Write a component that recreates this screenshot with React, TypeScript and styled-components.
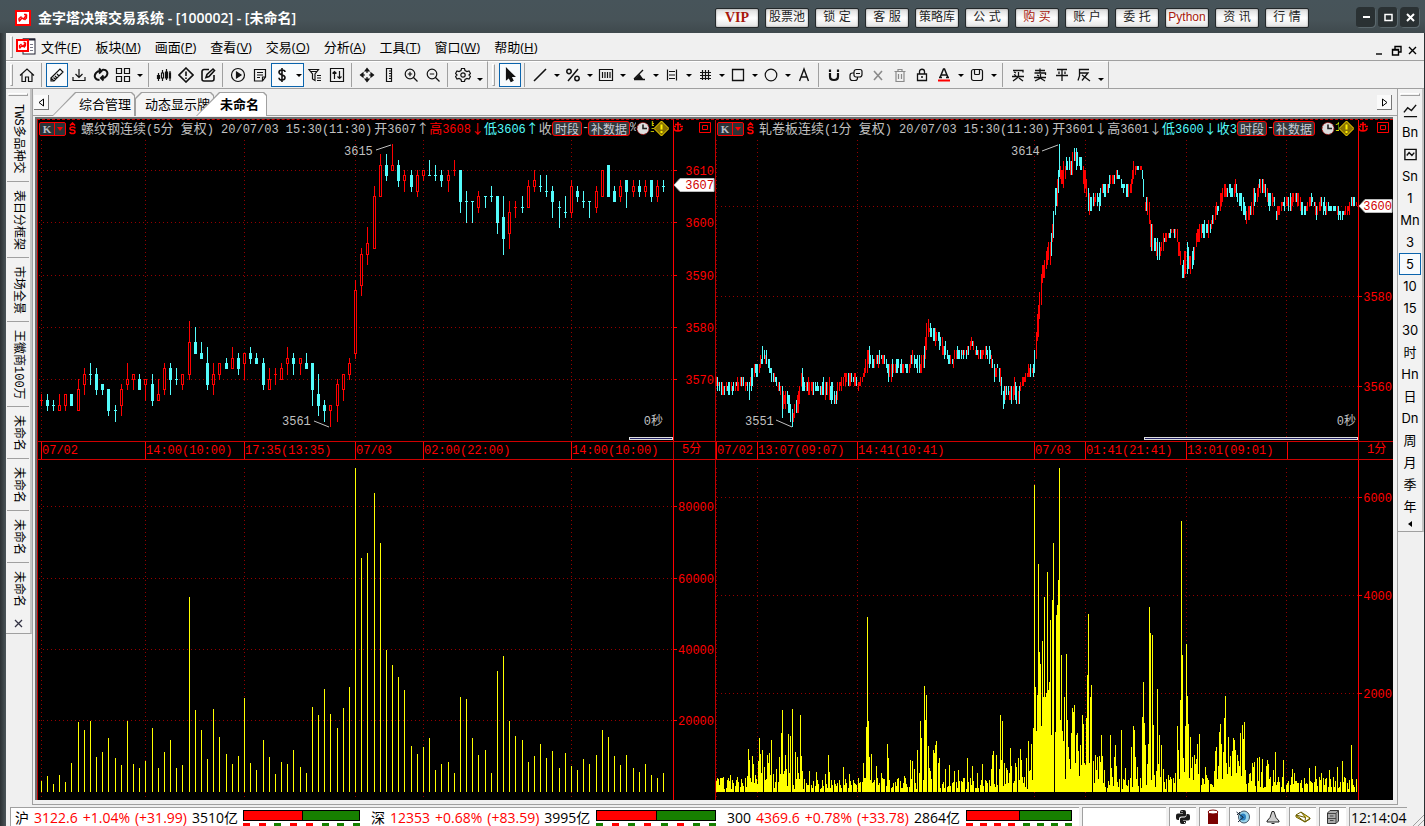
import React from 'react';
import styled, { createGlobalStyle, css } from 'styled-components';

const UI = '"Open Sans", "Noto Sans CJK SC", sans-serif';
const MONO = '"Liberation Mono", "Noto Sans CJK SC", monospace';
const LINE = '#a0a0a0';
const FACE = '#f0f0f0';

const Global = createGlobalStyle`
  * { box-sizing: border-box; }
  body { margin: 0; background: #3f4a4f; font: 13px/18px ${UI}; color: #000; }
  button { font: inherit; color: inherit; padding: 0; margin: 0; border: 0; background: none; cursor: default; }
  svg { display: block; flex: none; }
`;

/* ---------- icons ---------- */

const ICONS: Record<string, React.ReactNode> = {
  home: <path d="M1 8.500 8 2l7 6.500M3 7v7.500h3.500V10h3v4.500H13V7" />,
  ruler: <path d="m2 11 9-9 3 3-9 9zM2 11v3h3M6 9l2 2M8 7l2 2M4.500 10.500l2 2" />,
  download: <path d="M8 2v8M4.500 7 8 10.500 11.500 7M2 10v3.500h12V10" />,
  refresh: (
    <g strokeWidth="2">
      <path d="M6.500 13C2 13 .5 9 3 6c1-1.500 2.500-2.200 4.500-2.200M9 3c5-1 6.500 3 4.500 6-1 1.500-2.500 2.200-4.500 2.200" />
      <path d="M6 1.500 8.500 4 6 6.500M10.500 8.500 8 11l2.500 2.500" />
    </g>
  ),
  grid: <path d="M1.500 1.500h5v5h-5zM9.500 1.500h5v5h-5zM1.500 9.500h5v5h-5zM9.500 9.500h5v5h-5z" />,
  candles: (
    <g>
      <path d="M2.500 6v8M6.500 3v11M10.500 2v11M14 4v10" />
      <path d="M1.500 8.500h2v3h-2z" fill="#111" />
      <path d="M5.500 6h2v5h-2z" fill="#fff" />
      <path d="M9.500 5h2v6h-2zM13.500 6h1v5h-1z" fill="#111" />
    </g>
  ),
  alert: <path d="M8 1 15 8 8 15 1 8zM8 4.500v4.500M8 10.500v1.500" strokeWidth="1.600" />,
  edit: <path d="M9 2.500H4a2 2 0 0 0-2 2V12a2 2 0 0 0 2 2h8a2 2 0 0 0 2-2V8M6 10.500l1-3L13 2l1.500 1.500L9 9.500z" strokeWidth="1.600" />,
  play: (
    <g>
      <circle cx="8" cy="8" r="6.500" />
      <path d="m6.500 5 4.500 3-4.500 3z" fill="#111" />
    </g>
  ),
  note: <path d="M2.500 2.500h11V10l-3 4h-8zM13.500 10h-3v4M5 5.500h6M5 8h6M5 10.500h3" />,
  dollar: <path d="M11 5c0-1.500-1.300-2-3-2s-3 .7-3 2.300C5 8.800 11 7 11 10.500 11 12 9.700 13 8 13s-3-.7-3-2.300M8 1v14" strokeWidth="1.600" />,
  filter: <path d="M2 2.500h9.500L8 7v6.500L5.500 12V7zM4 4.500h6M10 8.500h4M10 11h4M10 13.500h4" />,
  updown: <path d="M1.500 1.500h13v13h-13zM5.500 12V4.500M3.500 6.500l2-2 2 2M10.500 4v7.500M8.500 9.500l2 2 2-2" />,
  move: <path d="M8 3v3M8 10v3M3 8h3M10 8h3M6 4l2-2.500L10 4zM6 12l2 2.500L10 12zM4 6 1.500 8 4 10zM12 6l2.500 2L12 10z" fill="#111" />,
  scale: <path d="M5.500 1.500h5v13h-5zM8 4h2.500M8 6.500h2.500M8 9h2.500M8 11.500h2.500" />,
  zoomIn: <path d="M11.800 7a4.800 4.800 0 1 1-9.600 0 4.800 4.800 0 0 1 9.600 0zM10.500 10.500l4 4M4.800 7h4.400M7 4.800v4.400" />,
  zoomOut: <path d="M11.800 7a4.800 4.800 0 1 1-9.600 0 4.800 4.800 0 0 1 9.600 0zM10.500 10.500l4 4M4.800 7h4.400" />,
  gear: (
    <g>
      <path d="M6.500 1.500h3l.5 2 2 1 2-.5 1.500 2.500L14 8l1.500 1.500L14 12l-2-.5-2 1-.5 2h-3l-.5-2-2-1-2 .5-1.500-2.500L2 8 .5 6.500 2 4l2 .5 2-1z" />
      <circle cx="8" cy="8" r="2.200" />
    </g>
  ),
  cursor: <path d="M4.500 1.500v11l2.500-2 2 4 2-1-2-4h3.500z" fill="#111" />,
  line: <path d="M2 14 14 2" strokeWidth="1.600" />,
  percent: <path d="M3 14 13 2M6.200 4.500a2.200 2.200 0 1 1-4.400 0 2.200 2.200 0 0 1 4.400 0zM14.200 11.500a2.200 2.200 0 1 1-4.400 0 2.200 2.200 0 0 1 4.400 0z" strokeWidth="1.500" />,
  columns: <path d="M1.500 2.500h13v11h-13zM4.500 5v6M7 5v6M9.500 5v6M12 5v6" />,
  angle: (
    <g>
      <path d="M3 12 12 3M3 12.500h11" strokeWidth="1.400" />
      <path d="M5 11.500 8.500 8l2.500 3.500z" fill="#111" />
    </g>
  ),
  levels: <path d="M3.500 2.500v11M12.500 2.500v11M5 4.500h6M5 8h6M5 11.500h6" />,
  hash: <path d="M5.500 3v10M8.500 3v10M11.500 3v10M3 5.500h11M3 8.500h11M3 11.500h11" />,
  square: <path d="M2.500 2.500h11v11h-11z" strokeWidth="1.300" />,
  circle: <circle cx="8" cy="8" r="5.800" />,
  letter: <path d="M3.500 14 8 2l4.500 12M5 10h6" strokeWidth="1.400" />,
  magnet: (
    <g strokeWidth="2.200">
      <path d="M4 6v3.500C4 12 5.500 13 8 13s4-1 4-3.500V6" />
      <path d="M4 2.500V5M12 2.500V5" />
    </g>
  ),
  overlap: <path d="M8.500 2.500H12A2 2 0 0 1 14 4.500v3A2.500 2.500 0 0 1 11.500 10H8a2 2 0 0 1-2-2V5a2.500 2.500 0 0 1 2.500-2.500zM6 6H4.500A2.500 2.500 0 0 0 2 8.500V11a2.500 2.500 0 0 0 2.500 2.500H7A2.500 2.500 0 0 0 9.500 11v-1M8 6.500h4" />,
  cross: <path d="m4 4 8 9M12 4l-8 9" stroke="#8a8a8a" strokeWidth="1.600" />,
  trash: <path d="M2.500 4.500h11M6 4V2.500h4V4M4 5v9.500h8V5M6.500 7v5M9.500 7v5" stroke="#8a8a8a" />,
  lock: <path d="M3.500 7h9v6.500h-9zM5.500 7V4.500c0-3 5-3 5 0V7M7 10h2" strokeWidth="1.300" />,
  textColor: (
    <g>
      <path d="M4 10.500 7.500 2h1L12 10.500M5.500 8h5M3 10.500h3M10 10.500h3" strokeWidth="1.500" />
      <path d="M2 13.500h12" stroke="#f00" strokeWidth="2" />
    </g>
  ),
  save: (
    <g>
      <rect x="2.500" y="2.500" width="11" height="11" rx="2" />
      <path d="M5.500 3v3.500a1 1 0 0 0 1 1h3a1 1 0 0 0 1-1V3" />
    </g>
  ),
  buy: <path d="M3 3.500h10v2M4 5l2 1M2 9.500h12M8.500 5v5l-5.500 4M9 11l4 3M4 7.500l2 1" strokeWidth="1.300" />,
  sell: <path d="M3 3.500h10M8 1.500v4M2.500 6h11v2M2 10.500h12M8.500 7v4l-5.500 3M9 11.500l4 2.500M5 8l2 1" strokeWidth="1.300" />,
  flat: <path d="M3 2.500h10M2 8.500h12M8 3v11M5 4.500v2.500M11 4.500v2.500" strokeWidth="1.300" />,
  reverse: <path d="M13 2.500H3.500V9L2 13.500M4 6h8L6 13.500M6 8l8 6" strokeWidth="1.300" />,
  trend: <path d="m1 10 4-5 4 3 5-6M1 14.500h14" strokeWidth="1.500" />,
  wave: <path d="M2 2.500h12v11H2zM4 9l2.500-3 3 3L12 6" strokeWidth="1.500" />,
};

const Icon = ({ name, size = 16 }: { name: string; size?: number }) => (
  <svg width={size} height={size} viewBox="0 0 16 16" fill="none" stroke="#111" strokeWidth="1.200" aria-hidden>
    {ICONS[name]}
  </svg>
);

const AppMark = () => (
  <svg width="16" height="16" viewBox="0 0 16 16" aria-hidden>
    <rect width="16" height="16" fill="#f00" />
    <rect x="2" y="2" width="12" height="12" fill="#fff" />
    <path d="M4 11.500 7 8l1.500 1L12 4.500M9 4.500h2.500M11.500 5v3l-2 2M6.500 6.500 4 8.500v2" stroke="#f00" strokeWidth="1.400" fill="none" />
  </svg>
);

const MenuMark = () => (
  <svg width="20" height="17" viewBox="0 0 20 17" aria-hidden>
    <rect x="7" y="1" width="12" height="15" fill="#fff" stroke="#223" />
    <path d="M7 1.500h12" stroke="#223" strokeWidth="2" />
    <path d="M14 6.500h3M14 9.500h3M14 12.500h3" stroke="#778" />
    <rect x="1" y="2" width="11" height="11" fill="#fff" stroke="#f00" strokeWidth="2" />
    <path d="M3.500 10.500 6 7.500l1 1 3-4M7.500 4.500H9M9.500 5v2.500l-1.500 2M5.500 6 3.500 7.500v2" stroke="#f00" strokeWidth="1.300" fill="none" />
  </svg>
);

/* ---------- window frame ---------- */

const Window = styled.div`
  display: flex;
  flex-direction: column;
  min-height: 100vh;
  padding: 0 1px 0 6px;
  background: linear-gradient(90deg, #2b3033, #4b5559 6px, #2b3033);
`;

const TitleBar = styled.header`
  display: flex;
  align-items: center;
  height: 33px;
  margin: 0 -1px 0 -6px;
  padding: 2px 5px 0 15px;
  background: linear-gradient(#47545a, #475358 60%, #3f494d);
  color: #fff;
`;

const Title = styled.h1`
  flex: 1;
  margin: 0 0 0 7px;
  font-size: 14px;
  font-weight: 600;
  white-space: nowrap;
`;

const TitleTools = styled.nav`
  display: flex;
  gap: 6px;
  margin-right: 47px;
`;

const TitleButton = styled.button<{ $tone?: 'red' | 'vip' }>`
  width: 44px;
  height: 20px;
  border: 1px solid #23282a;
  border-radius: 2px;
  background: linear-gradient(#dcdcdc, #fff 50%, #e4e4e4);
  box-shadow: inset 0 0 2px #888;
  color: ${p => (p.$tone ? '#a8180c' : '#222')};
  font: 12px/17px "Liberation Sans", "Noto Sans CJK SC", sans-serif;
  white-space: nowrap;
  ${p => p.$tone === 'vip' && css`font: 700 14px/17px "Liberation Serif", serif;`}
`;

const Caption = styled.div`
  display: flex;
  gap: 2px;
`;

const CaptionButton = styled.button`
  display: grid;
  place-items: center;
  width: 20px;
  height: 21px;
  border-radius: 4px;
  background: #2a3133;
  box-shadow: inset -1px -1px 0 #5b686d;
`;

const Client = styled.div`
  display: flex;
  flex: 1;
  flex-direction: column;
  background: ${FACE};
`;

/* ---------- menu and tool bars ---------- */

const Handle = styled.span`
  width: 3px;
  height: 22px;
  border: 1px solid ${LINE};
  border-left-color: #fff;
  border-top-color: #fff;
`;

const MenuBar = styled.nav`
  display: flex;
  align-items: center;
  height: 28px;
  padding: 0 5px 0 4px;
  border-bottom: 1px solid ${LINE};

  > ${Handle} { margin-right: 3px; }
`;

const MenuItems = styled.div`
  display: flex;
  flex: 1;
  gap: 14px;
  margin-left: 5px;
`;

const MdiButtons = styled.div`
  display: flex;
  gap: 4px;
  align-self: flex-end;
  padding-bottom: 3px;
`;

const ToolRow = styled.div`
  display: flex;
  height: 28px;
  border-bottom: 1px solid ${LINE};
`;

const ToolBar = styled.div<{ $start: number }>`
  display: flex;
  align-items: center;
  padding: 0 2px 0 4px;
  border-right: 1px solid ${LINE};
  border-top: 1px solid #fff;

  > ${Handle} { margin-right: ${p => p.$start}px; }
`;

const Tool = styled.button`
  display: grid;
  place-items: center;
  width: 22px;
  height: 24px;
`;

const Pick = styled.span<{ $on?: boolean }>`
  display: flex;
  height: 24px;
  ${p => p.$on && css`background: #f8fbfd; box-shadow: inset 0 0 0 1px #0a64ad;`}
`;

const Drop = styled.button<{ $low?: boolean }>`
  display: grid;
  place-items: center;
  width: 11px;
  height: 24px;
  padding-top: ${p => (p.$low ? 9 : 0)}px;

  &::before {
    content: '';
    border: 3px solid transparent;
    border-top-color: #000;
    border-bottom: 0;
  }
`;

const Divider = styled.span`
  width: 8px;
  height: 24px;
  background: linear-gradient(${LINE}, ${LINE}) 3px 0 / 1px 100% no-repeat;
`;

/* ---------- body ---------- */

const Body = styled.div`
  display: grid;
  grid-template-columns: 26px minmax(0, 1fr) 26px;
  align-items: start;
`;

const Grip = styled.span`
  width: 20px;
  height: 3px;
  border: 1px solid ${LINE};
  border-left-color: #fff;
  border-top-color: #fff;
`;

const Side = styled.aside<{ $gap: number }>`
  display: flex;
  flex-direction: column;
  align-items: center;
  padding: 4px 1px 0;
  border-right: 2px solid #c4c4c4;
  border-bottom: 1px solid ${LINE};
  background: #f2f2f2;

  > ${Grip} { margin-bottom: ${p => p.$gap}px; }
`;

const SideTab = styled.button`
  width: 22px;
  padding: 8px 0 7px;
  border-bottom: 1px solid ${LINE};
  font: 12px/22px ${MONO};
  writing-mode: vertical-rl;
  text-orientation: sideways;
  white-space: nowrap;

  &:last-of-type { border-bottom: 0; }
`;

const SideClose = styled.span<{ $height: number }>`
  display: grid;
  place-items: center;
  height: ${p => p.$height}px;
  width: 20px;
`;

const Period = styled.button<{ $on?: boolean }>`
  display: grid;
  place-items: center;
  width: 22px;
  height: 22px;
  font: 13px/20px "Inter", "Noto Sans CJK SC", sans-serif;
  ${p => p.$on && css`background: #f8fbfd; box-shadow: inset 0 0 0 1px #0a64ad;`}
`;

const Main = styled.main`
  border: 1px solid ${LINE};
  border-top: 0;
`;

const TabStrip = styled.div`
  display: flex;
  justify-content: space-between;
  height: 27px;
  padding: 6px 5px 0 1px;
  border-bottom: 1px solid ${LINE};
`;

const Tabs = styled.div`
  display: flex;
  flex: 1;
  align-items: flex-end;
  height: 21px;
  margin-left: 3px;
`;

const Arrow = styled.button`
  display: grid;
  place-items: center;
  width: 15px;
  height: 15px;
  background: #fafafa;
  border: solid #777;
  border-width: 0 1px 1px 0;
`;

const Tab = styled.button<{ $kind: 'first' | 'mid' | 'active' }>`
  position: relative;
  height: 24px;
  padding: 0 ${p => (p.$kind === 'active' ? 8 : 4)}px 0 ${p => (p.$kind === 'first' ? 27 : p.$kind === 'mid' ? 10 : 24)}px;
  margin-left: ${p => (p.$kind === 'active' ? -18 : 0)}px;
  font-weight: ${p => (p.$kind === 'active' ? 700 : 400)};
  white-space: nowrap;
  background: ${LINE};
  clip-path: ${p => (p.$kind === 'mid'
    ? 'polygon(0 6px, 6px 0, calc(100% - 3px) 0, 100% 3px, 100% 100%, 0 100%)'
    : 'polygon(0 100%, 23px 0, calc(100% - 3px) 0, 100% 3px, 100% 100%)')};

  &::before {
    content: '';
    position: absolute;
    inset: 1px 1px 0 1px;
    background: ${p => (p.$kind === 'active' ? '#fff' : '#f5f5f5')};
    clip-path: ${p => (p.$kind === 'mid'
      ? 'polygon(0 6px, 6px 0, calc(100% - 3px) 0, 100% 3px, 100% 100%, 0 100%)'
      : 'polygon(0 100%, 23px 0, calc(100% - 3px) 0, 100% 3px, 100% 100%)')};
  }

  span { position: relative; }
`;

/* ---------- charts ---------- */

const ChartFrame = styled.div`
  margin: 1px 4px 4px 2px;
  border: solid #6d6d6d;
  border-width: 2px 0 0 2px;
`;

const Charts = styled.div`
  display: grid;
  grid-template-columns: repeat(2, minmax(0, 1fr));
  background: #000;
  border-top: 1px dashed #d00000;
`;

const Panel = styled.section<{ $axis: number }>`
  display: grid;
  grid-template-columns: minmax(0, 1fr) ${p => p.$axis}px;
  grid-template-rows: 17px 304px 19px 340px;
  border-left: 1px solid #c00000;
  font: 12px/17px ${MONO};
`;

const QuoteRow = styled.div`
  position: relative;
  display: flex;
  align-items: center;
  padding-left: 1px;
  overflow: hidden;
  white-space: pre;
`;

const KButton = styled.button`
  display: flex;
  align-items: center;
  flex: none;
  width: 27px;
  height: 14px;
  border: 1px solid #f00;
  border-radius: 2px;
  background: #2c3236;
  color: #b9bec8;
  font: 700 11px/12px "Liberation Serif", serif;

  span { flex: 1; border-right: 1px solid #f00; }
  svg { margin: 0 2px; }
`;

const Quote = styled.span<{ $color: string }>`
  display: flex;
  align-items: baseline;
  height: 17px;
  color: ${p => p.$color};
  line-height: 16px;
`;

const Prices = styled.div`
  display: flex;
  margin-left: 2px;
`;

const Han = styled.span`
  font-family: "Noto Sans CJK SC", sans-serif;
  font-size: 13px;
`;

const Overlay = styled.div`
  position: absolute;
  top: 1px;
  right: 4px;
  display: flex;
  align-items: center;
`;

const Sliver = styled.span<{ $width: number; $color?: string }>`
  width: ${p => p.$width}px;
  height: 15px;
  overflow: hidden;
  color: ${p => p.$color ?? '#c0c0c0'};
  line-height: 15px;
`;

const Chip = styled.button`
  height: 15px;
  padding: 0 2px;
  border: 1px solid #f00;
  border-radius: 3px;
  background: #33383b;
  color: #c9cbd6;
  font: 12px/12px "Noto Sans CJK SC", sans-serif;
`;

const AxisCell = styled.div`
  display: flex;
  justify-content: space-between;
  padding: 2px 4px 0 0;
  border-left: 1px solid #f00;
`;

const Plot = styled.div`
  position: relative;
  > svg { width: 100%; height: 100%; }
`;

const Countdown = styled.span<{ $right: number }>`
  position: absolute;
  right: ${p => p.$right}px;
  bottom: 10px;
  color: #c0c0c0;
`;

const RangeBar = styled.span<{ $width: string }>`
  position: absolute;
  right: 0;
  bottom: 1px;
  width: ${p => p.$width};
  height: 3px;
  background: #202060;
  border: 1px solid #ddd;
`;

const TimeRow = styled.div<{ $cols: string }>`
  display: grid;
  grid-template-columns: ${p => p.$cols};
  border: solid #d00000;
  border-width: 1px 0;
  color: #f00;
  line-height: 19px;

  span {
    min-width: 0;
    height: 17px;
    border-left: 1px solid #f00;
    white-space: nowrap;
  }
  span:empty:first-child { border: 0; }
`;

const PeriodCell = styled.div`
  border: solid #d00000;
  border-width: 1px 0 1px 1px;
  padding-left: 8px;
  color: #f00;
`;

const AxisSvg = styled.svg`
  width: 100%;
  height: 100%;
  border-left: 1px solid #f00;
  font: 12px ${MONO};
`;

/** Splits a quote string so that Chinese runs are set one size larger than the digits. */
const Mixed = ({ text, color = '#c0c0c0' }: { text: string; color?: string }) => (
  <Quote $color={color}>
    {text.split(/([\x20-\x7e]+)/).filter(Boolean).map((run, i) =>
      /^[\x20-\x7e]/.test(run) ? <span key={i}>{run}</span> : <Han key={i}>{run}</Han>,
    )}
  </Quote>
);

// Five-minute bars as open, high, low, close above 3500.
const CANDLES = `66,67,65,66,r 66,67,64,65 65,66,64,65 64,67,64,65 65,67,64,67 67,67,65,65 64,70,64,68 69,72,67,71 71,73,69,71 71,72,67,68
69,69,67,68 68,68,63,64 64,65,62,64 65,69,63,68 69,73,68,70 70,71,68,71 70,71,68,68 69,70,66,70 69,71,65,66 66,70,66,67
68,73,67,72 72,73,67,70 70,72,69,70 69,71,68,71 71,81,70,77 77,80,75,75 75,77,74,74 73,76,68,69 69,73,67,71 71,73,70,73
73,74,72,72 72,76,72,74 74,75,71,72 73,75,70,75 75,76,73,74 74,75,73,73 73,74,68,69 68,72,68,70 71,72,69,71,r 70,73,70,72
73,76,71,74 74,75,71,73 73,74,71,74 73,75,72,72 73,73,65,68 67,71,63,65 65,66,62,64 64,65,61,65 65,70,62,69 68,71,66,71
71,74,70,73 75,89,74,87 88,95,86,94 94,99,92,96 95,107,95,105 105,113,105,111 111,113,108,109 110,115,110,111 111,112,107,108 108,110,106,109
109,110,106,107 106,110,105,109 109,110,108,110 109,112,109,109 109,111,108,109 109,110,107,108 108,110,106,109 110,112,109,110,r 110,110,102,104 104,106,100,104
104,104,100,104 103,106,102,105 105,105,103,105 105,107,104,105 105,105,98,100 101,105,94,97 98,104,95,102 103,104,101,103,r 103,105,102,103 103,108,103,107
107,110,106,108 107,109,106,107 106,109,105,106 106,107,101,104 103,104,99,103 102,105,101,102 102,108,101,107 106,107,104,105 104,106,103,104 104,104,101,104
103,107,102,106 105,110,105,110 111,111,105,105 106,107,104,104 105,108,104,107 108,108,103,106 106,108,105,107 107,108,105,106 106,108,105,107 108,108,104,105
105,108,104,107 107,108,106,107`
  .split(/\s+/)
  .map(row => {
    const [o, h, l, c, flag] = row.split(',');
    return { o: +o, h: +h, l: +l, c: +c, up: +c > +o || flag === 'r' };
  });

const barX = (i: number) => 3 + Math.floor((i * 37) / 6);
const priceY = (p: number) => Math.round(33 + (110 - p) * 5.22);

// Height in pixels of each five-minute volume bar.
const VOLUMES = [
  11, 16, 8, 17, 10, 29, 70, 62, 71, 35, 40, 54, 34, 27, 71, 28, 24, 31, 64, 24,
  40, 52, 24, 27, 195, 82, 62, 33, 83, 55, 38, 28, 36, 94, 29, 22, 52, 35, 18, 30,
  28, 42, 25, 19, 85, 77, 103, 78, 64, 84, 105, 324, 234, 239, 299, 249, 142, 127, 115, 102,
  46, 38, 45, 54, 22, 28, 30, 19, 95, 93, 54, 37, 42, 19, 121, 136, 71, 56, 52, 30,
  36, 48, 34, 41, 24, 39, 26, 22, 33, 28, 37, 62, 55, 36, 27, 37, 24, 20, 28, 17, 14, 19,
];

// One-minute price envelope: x, top, bottom, in thirds of a pixel.
const ENVELOPE = `12,742,769 20,755,782 30,755,795 45,755,782 55,755,795 70,755,782 90,742,769 105,755,782 110,755,809 117,728,769 125,702,741 137,702,740
150,660,702 165,660,702 172,702,740 185,728,755 200,755,782 210,782,849 222,782,822 232,800,863 242,849,891 250,809,849 258,769,836 266,714,769
275,742,782 290,755,795 310,755,782 325,769,795 340,742,795 355,755,822 368,782,822 380,755,795 395,728,755 410,728,769 425,728,769 438,755,782
450,742,755 457,702,740 467,648,714 475,675,702 485,687,714 500,660,702 515,675,702 522,675,714 528,700,755 540,702,740 550,687,728 570,702,728
590,702,728 598,660,700 610,687,714 626,687,740 637,648,705 643,580,648 650,580,620 665,594,633 680,605,645 693,633,675 705,660,687 715,675,705
722,687,714 730,648,687 745,660,687 760,660,687 770,633,660 778,621,648 785,648,675 800,660,687 815,660,687 828,648,687 837,675,714 843,700,755
855,702,728 865,728,769 873,769,836 880,769,795 890,769,800 898,769,836 907,755,800 917,782,836 925,742,795 935,742,769 950,702,740 965,700,740
968,580,700 976,570,648 980,499,600 985,433,540 992,405,458 1000,390,445 1007,337,405 1013,340,430 1018,290,350 1025,216,300 1033,161,242 1040,95,160
1048,108,161 1055,95,161 1062,80,120 1070,80,120 1078,80,135 1087,54,108 1095,67,108 1105,80,120 1113,95,161 1120,120,200 1130,200,242 1140,200,242
1150,189,216 1162,189,242 1170,162,200 1185,162,189 1195,135,175 1205,130,160 1215,120,148 1222,120,160 1230,162,175 1242,162,200 1254,162,189 1264,95,162
1271,108,121 1287,108,121 1292,121,202 1299,215,256 1309,202,256 1314,280,364 1324,310,364 1337,335,390 1344,350,378 1351,310,364 1364,310,337 1379,297,310
1394,297,337 1404,350,405 1411,391,470 1420,337,430 1426,297,420 1432,378,432 1441,364,417 1449,324,390 1456,283,337 1469,283,324 1489,283,324 1504,256,283
1512,215,256 1522,215,256 1529,162,229 1539,162,200 1549,162,202 1559,175,202 1569,148,189 1579,190,229 1589,202,242 1601,229,283 1611,229,269 1622,189,242
1634,175,215 1642,148,189 1652,148,189 1662,162,200 1672,189,242 1684,189,215 1692,229,269 1709,215,242 1722,202,229 1734,202,242 1744,175,215 1754,189,229
1764,202,256 1779,229,256 1794,202,225 1804,189,229 1811,229,269 1824,202,242 1839,215,256 1854,229,242 1874,229,256 1894,242,269 1909,215,256 1919,202,229
1927,202,229 1940,215,229`
  .split(/\s+/)
  .map(row => row.split(',').map(Number));

const noise = (n: number) => {
  const v = Math.sin(n * 127.1 + 311.7) * 43758.5453;
  return v - Math.floor(v);
};

const STEP = 1.27;
const TICK = 13.5;

const minuteBars = () => {
  let up = '';
  let down = '';
  let k = 0;
  let prev = 0;
  for (let i = 0; i < 505; i++) {
    const x = Math.floor(i * STEP);
    const u = 12 + x * 3;
    while (k < ENVELOPE.length - 2 && ENVELOPE[k + 1][0] < u) k++;
    const [x0, t0, b0] = ENVELOPE[k];
    const [x1, t1, b1] = ENVELOPE[k + 1];
    const f = Math.min(1, Math.max(0, (u - x0) / (x1 - x0)));
    const top = t0 + (t1 - t0) * f;
    const bottom = b0 + (b1 - b0) * f;
    const h = bottom - top;
    const a = 769 + Math.round((top + (noise(i) - 0.4) * h * 0.5 - 769) / TICK) * TICK;
    const b = Math.max(a + TICK, 769 + Math.round((bottom - (noise(i + 900) - 0.4) * h * 0.5 - 769) / TICK) * TICK);
    const mid = (top + bottom) / 2;
    const rising = mid < prev - 1.5 ? noise(i + 50) < 0.75 : mid > prev + 1.5 ? noise(i + 50) < 0.25 : noise(i + 50) < 0.42;
    const d = `M${x}.5 ${Math.round(a / 3 - 7)}V${Math.round(b / 3 - 7)}`;
    if (rising) up += d;
    else down += d;
    prev = mid;
  }
  return { up, down };
};

const MINUTES = minuteBars();

// Tallest one-minute volume bars: x, top, measured from the plot's upper left.
const PEAKS = `20,955 42,945 83,867 86,900 92,888 95,912 106,903 108,834 110,882 115,870 119,921 126,885 129,909 131,879 135,840 147,927 153,891 158,820 160,750 167,885 169,927 174,822 178,828 182,747 184,822
190,876 194,891 197,939 201,765 203,888 206,933 222,933 237,936 257,942 265,885 268,936 299,921 312,942 345,910 351,800 353,471 356,783 358,891 362,882 374,918 386,939 399,852
401,894 438,948 451,900 455,903 460,927 467,870 472,940 474,783 476,834 483,678 485,780 488,705 492,858 494,925 496,933 503,870 506,880 508,855 510,843 515,910 517,894 530,927
540,915 552,933 560,930 580,894 592,918 603,939 615,912 635,927 637,885 640,873 646,885 653,927 655,765 658,900 660,783 665,910 669,925 671,930 676,940 678,864 681,918 690,909 692,921 696,894 701,867
703,900 715,894 719,843 721,933 724,930 726,852 730,804 733,75 735,681 740,735 742,312 744,576 746,612 751,543 753,714 755,411 758,711 762,336 765,690
767,666 769,480 774,420 777,249 783,465 785,435 788,360 790,24 794,585 796,813 799,843 801,711 805,582 808,780 810,861 813,897 817,820 819,744 822,756 824,735
828,825 830,819 833,873 838,855 840,915 842,765 844,792 849,915 851,774 853,645 855,462 860,711 862,675 867,903 872,885 874,930 876,891 881,888 883,905 885,825 888,888 892,930 906,825
908,925 915,891 917,855 919,918 931,810 940,925 953,861 958,798 960,810 963,891 967,921 978,771 981,666 983,789 985,855 990,912 992,852 994,441 997,519 1001,525 1003,795
1010,933 1012,687 1015,912 1017,825 1022,855 1026,927 1058,798 1060,870 1065,720 1067,183 1069,585 1072,894 1076,798 1078,552 1080,708 1083,792 1088,831 1090,925 1092,891 1097,885 1099,912 1101,897
1103,852 1108,822 1122,921 1142,933 1144,873 1147,861 1151,918 1153,816 1156,792 1158,852 1163,876 1165,774 1167,708 1169,909 1174,831 1176,921 1178,888 1183,873 1185,834 1187,840 1190,870
1194,885 1197,903 1199,918 1201,819 1206,795 1208,837 1210,786 1213,930 1228,909 1230,921 1233,906 1240,894 1244,891 1249,936 1251,897 1260,918 1262,900 1265,912 1276,930 1281,876 1299,900 1319,927 1324,939
1358,924 1371,918 1384,939 1403,930 1422,921 1433,903 1453,855 1464,969`
  .split(/\s+/)
  .map(row => row.split(',').map(Number));

const minuteVolume = () => {
  let d = '';
  for (let i = 0; i < 505; i++) {
    const x = Math.floor(i * STEP);
    const hot = x > 318 && x < 346;
    const spread = hot ? 50 : x >= 346 && x < 386 ? 30 : (x > 30 && x < 90) || (x > 425 && x < 535) ? 18 : 12;
    const h = Math.round((hot ? 55 : 3) + noise(i + 77) * spread);
    d += `M${x}.5 332v-${h}`;
  }
  PEAKS.forEach(([x, y]) => {
    d += `M${Math.floor(x / 2.2725 - 4)}.5 332V${Math.round(y / 3)}`;
  });
  return d;
};

const MINUTE_VOLUME = minuteVolume();

const Grid = ({ w, h, xs, ys, top }: { w: number; h: number; xs: number[]; ys: number[]; top: number }) => (
  <g stroke="#960000" strokeDasharray="1 3" shapeRendering="crispEdges">
    {xs.map(x => <path key={`x${x}`} d={`M${x}.5 ${top}V${h - 2}`} />)}
    {ys.map(y => <path key={`y${y}`} d={`M1 ${y}.5H${w}`} />)}
  </g>
);

const Axis = ({ w, h, labels, tag }: { w: number; h: number; labels: [string, number][]; tag?: [string, number] }) => (
  <AxisSvg viewBox={`0 0 ${w - 1} ${h}`} preserveAspectRatio="none">
    {labels.map(([text, y]) => (
      <g key={text}>
        <path d={`M0 ${y}.5h3`} stroke="#f00" shapeRendering="crispEdges" />
        <text x={w - 2} y={y + 5} textAnchor="end" fill="#f00">{text}</text>
      </g>
    ))}
    {tag && (
      <g>
        <path d={`M0 ${tag[1]}l6 -6.500h${w - 8}v13h-${w - 8}z`} fill="#fff" stroke="#bbb" />
        <text x={w - 2} y={tag[1] + 4} textAnchor="end" fill="#d00000">{tag[0]}</text>
      </g>
    )}
  </AxisSvg>
);

const GRAY = '#c0c0c0';
const CYAN = '#54fcfc';
const RED = '#f00';
const YELLOW = '#e6d800';

type HeadProps = {
  name: string;
  unit: string;
  parts: [string, string][];
  /** Fragments of the covered quote that show between the chips. */
  slivers: [string, string, string];
};

const PanelHead = ({ name, unit, parts, slivers }: HeadProps) => (
  <>
    <QuoteRow>
      <KButton aria-label="K线类型">
        <span>K</span>
        <svg width="6" height="4" viewBox="0 0 6 4"><path d="M0 0h6L3 4z" fill="#f00" /></svg>
      </KButton>
      <svg width="15" height="14" viewBox="0 0 15 14" fill="none" stroke="#f00" strokeWidth="1.600" aria-hidden>
        <path d="M4 3.500 6.500 1 9 3.500M9 6.500c0-1-1-1.500-2.500-1.500S4 5.500 4 6.500 5 8 6.500 8 9 8.800 9 10s-1 1.500-2.500 1.500S4 11 4 10" />
      </svg>
      <Mixed text={`${name}(${unit} 复权) 20/07/03 15:30(11:30)`} />
      <Prices>
        {parts.map(([text, color], i) => <Mixed key={i} text={text} color={color} />)}
      </Prices>
      <Overlay>
        <Chip>时段</Chip>
        <Sliver $width={6}>{slivers[0]}</Sliver>
        <Chip>补数据</Chip>
        <Sliver $width={6}>{slivers[1]}</Sliver>
        <svg width="14" height="15" viewBox="0 0 14 15" aria-hidden>
          <circle cx="7" cy="7.500" r="6" fill="#ddd" stroke="#a01010" strokeDasharray="2 1" />
          <path d="M7 3.500v4h4" stroke="#222" strokeWidth="1.600" fill="none" />
        </svg>
        <Sliver $width={4} $color={YELLOW}>{slivers[2]}</Sliver>
        <svg width="15" height="15" viewBox="0 0 15 15" aria-hidden>
          <path d="M7.500 0 15 7.500 7.500 15 0 7.500z" fill="#8a7400" stroke="#ffe000" />
          <path d="M7.500 3.500v5M7.500 10v2" stroke="#fff200" strokeWidth="2" />
        </svg>
      </Overlay>
    </QuoteRow>
    <AxisCell>
      <svg width="10" height="10" viewBox="0 0 10 10" fill="none" stroke="#f00" strokeWidth="1.600" aria-hidden>
        <path d="M4 0v9M1 2.500h6M0 6c0 2 2 3 4 3s4-1 4-3M0 4.500h2M6 4.500h3" />
      </svg>
      <svg width="12" height="11" viewBox="0 0 12 11" fill="none" stroke="#f00" aria-hidden>
        <path d="M.5.5h11v10H.5zM3.500 3.500h5v4h-5z" />
      </svg>
    </AxisCell>
  </>
);

const FiveMinutePanel = () => (
  <Panel $axis={42}>
    <PanelHead
      name="螺纹钢连续"
      unit="5分"
      parts={[['开3607↑', GRAY], ['高3608↓', RED], ['低3606↑', CYAN], ['收', GRAY]]}
      slivers={['-', '%', '里']}
    />
    <Plot>
      <svg viewBox="0 0 635 304" preserveAspectRatio="none" role="img" aria-label="螺纹钢连续 5分 K线">
        <Grid w={635} h={304} xs={[3, 107, 206, 317, 385, 533]} ys={[33, 85, 138, 190, 242]} top={3} />
        <g shapeRendering="crispEdges">
          {CANDLES.map(({ o, h, l, c, up }, i) => {
            const x = barX(i);
            const top = priceY(Math.max(o, c));
            const low = priceY(Math.min(o, c));
            const color = up ? RED : CYAN;
            return (
              <g key={i} stroke={color}>
                <path d={`M${x + 0.5} ${priceY(h)}V${priceY(l) + 1}`} />
                {low === top ? (
                  <path d={`M${x - 1} ${top + 0.5}h3`} />
                ) : (
                  <rect x={x - 0.5} y={top + 0.5} width="2" height={low - top} fill={up ? '#000' : color} />
                )}
              </g>
            );
          })}
        </g>
        <path d="m338 13 15 -5M276 284l15 6" stroke={GRAY} />
        <g fill={GRAY}>
          <text x="306" y="18">3615</text>
          <text x="244" y="288">3561</text>
        </g>
      </svg>
      <Countdown $right={10}>0秒</Countdown>
      <RangeBar $width="7%" />
    </Plot>
    <Axis w={42} h={304} labels={[['3610', 33], ['3600', 85], ['3590', 138], ['3580', 190], ['3570', 242]]} tag={['3607', 48]} />
    <TimeRow $cols="3fr 104fr 99fr 111fr 68fr 148fr 102fr">
      <span />
      <span>07/02</span>
      <span>14:00(10:00)</span>
      <span>17:35(13:35)</span>
      <span>07/03</span>
      <span>02:00(22:00)</span>
      <span>14:00(10:00)</span>
    </TimeRow>
    <PeriodCell>5分</PeriodCell>
    <Plot>
      <svg viewBox="0 0 635 340" preserveAspectRatio="none" role="img" aria-label="螺纹钢连续 成交量">
        <Grid w={635} h={340} xs={[3, 107, 206, 317, 385, 533]} ys={[46, 118, 189, 260]} top={8} />
        <path
          d={VOLUMES.map((v, i) => `M${barX(i)}.5 332v-${v}`).join('')}
          stroke="#ff0"
          shapeRendering="crispEdges"
        />
      </svg>
    </Plot>
    <Axis w={42} h={340} labels={[['80000', 46], ['60000', 118], ['40000', 189], ['20000', 260]]} />
  </Panel>
);

const OneMinutePanel = () => (
  <Panel $axis={35}>
    <PanelHead
      name="轧卷板连续"
      unit="1分"
      parts={[['开3601↓', GRAY], ['高3601↓', GRAY], ['低3600↓', CYAN], ['收3', CYAN]]}
      slivers={['-', '', '1']}
    />
    <Plot>
      <svg viewBox="0 0 642 304" preserveAspectRatio="none" role="img" aria-label="轧卷板连续 1分 K线">
        <Grid w={642} h={304} xs={[0, 41, 141, 318, 369, 470, 570]} ys={[69, 159, 249]} top={3} />
        <g shapeRendering="crispEdges">
          <path d={MINUTES.up} stroke={RED} />
          <path d={MINUTES.down} stroke={CYAN} />
          <path d="M343.500 7V40M76.500 275V290" stroke={CYAN} />
        </g>
        <path d="m326 14 16 -6M60 283l16 7" stroke={GRAY} />
        <g fill={GRAY}>
          <text x="295" y="18">3614</text>
          <text x="29" y="288">3551</text>
        </g>
      </svg>
      <Countdown $right={2}>0秒</Countdown>
      <RangeBar $width="33.3%" />
    </Plot>
    <Axis w={35} h={304} labels={[['3580', 159], ['3560', 249]]} tag={['3600', 69]} />
    <TimeRow $cols="41fr 100fr 177fr 51fr 101fr 101fr 71fr">
      <span>07/02</span>
      <span>13:07(09:07)</span>
      <span>14:41(10:41)</span>
      <span>07/03</span>
      <span>01:41(21:41)</span>
      <span>13:01(09:01)</span>
      <span />
    </TimeRow>
    <PeriodCell>1分</PeriodCell>
    <Plot>
      <svg viewBox="0 0 642 340" preserveAspectRatio="none" role="img" aria-label="轧卷板连续 成交量">
        <Grid w={642} h={340} xs={[0, 41, 141, 318, 369, 470, 570]} ys={[37, 135, 233]} top={8} />
        <path d={MINUTE_VOLUME} stroke="#ff0" shapeRendering="crispEdges" />
      </svg>
    </Plot>
    <Axis w={35} h={340} labels={[['6000', 37], ['4000', 135], ['2000', 233]]} />
  </Panel>
);

/* ---------- status bar ---------- */

const StatusBar = styled.footer`
  display: flex;
  gap: 3px;
  height: 21px;
  padding: 2px 0 0 4px;
  font-size: 14px;
  line-height: 17px;
`;

const Pane = styled.div<{ $width?: number; $plain?: boolean }>`
  display: flex;
  align-items: flex-start;
  flex: ${p => (p.$width ? `0 0 ${p.$width}px` : '1 1 0')};
  border: solid ${LINE};
  border-width: 1px 0 0 1px;
  background: ${p => (p.$plain ? FACE : '#fff')};
  white-space: nowrap;
`;

const IconPane = styled(Pane)`
  justify-content: center;
  padding-top: 1px;
`;

const Time = styled.time`
  padding: 1px 0 0 1px;
`;

const Grips = styled.div`
  margin-left: auto;
  align-self: flex-end;
`;

const Market = styled.div`
  display: flex;
  flex: 1;
  gap: 5px;
  margin: 1px 7px 0 4px;
`;

const Num = styled.span<{ $red?: boolean }>`
  color: ${p => (p.$red ? '#f00' : '#000')};
`;

const Breadth = styled.div<{ $width: number }>`
  flex: 0 0 ${p => p.$width}px;
  margin: 1px 0 0 auto;
`;

const Ratio = styled.div`
  height: 11px;
  border: 1px solid #000;
  background: linear-gradient(90deg, #f00 50%, #000 50%, #000 51%, #178000 51%);
`;

const Dashes = styled.div`
  display: flex;
  justify-content: space-between;
  margin-top: 2px;
`;

const Dash = styled.span<{ $up: boolean }>`
  width: 7px;
  height: 3px;
  background: ${p => (p.$up ? '#f00' : '#178000')};
`;

const MARKETS = [
  { name: '沪', nums: ['3122.6', '+1.04%', '(+31.99)'], total: '3510亿', width: 117, dash: 'rrgrrggg' },
  { name: '深', nums: ['12353', '+0.68%', '(+83.59)'], total: '3995亿', width: 120, dash: 'grgrgrgg' },
  { name: '300', nums: ['4369.6', '+0.78%', '(+33.78)'], total: '2864亿', width: 106, dash: 'rrrrgggg' },
];

const STATUS_ICONS: [string, React.ReactNode][] = [
  ['Python', (
    <g key="a" fill="#1c1c1c">
      <path d="M5 3a2 2 0 0 1 2-2h2a2 2 0 0 1 2 2v3a1.500 1.500 0 0 1-1.500 1.500h-3A2.500 2.500 0 0 0 4 10v1H3a2 2 0 0 1-2-2V6.500a2 2 0 0 1 2-2h5V4H5z" />
      <path d="M11.500 5H13a2 2 0 0 1 2 2v2.500a2 2 0 0 1-2 2H8v.500h3v1a2 2 0 0 1-2 2H7a2 2 0 0 1-2-2v-3a1.500 1.500 0 0 1 1.500-1.500h3a2.500 2.500 0 0 0 2-2.500z" />
      <path d="M6.500 2.500h1M9 13.500h1" stroke="#fff" />
    </g>
  )],
  ['数据库', <g key="b"><rect x="3" y="3" width="10" height="12" fill="#7c0000" /><ellipse cx="8" cy="3" rx="5" ry="2" fill="#fff" stroke="#7c0000" /></g>],
  ['行情连接', <g key="c"><ellipse cx="9" cy="8" rx="5.500" ry="6" fill="#9cd4ea" stroke="#456" /><ellipse cx="8" cy="8" rx="3" ry="3.500" fill="#2a7fc0" /><path d="m1.500 3 7 5.500M3 13l5-4.500M2 6l3-3" stroke="#123" /></g>],
  ['提醒', <path key="d" d="M7 2.500h2l2 6 3 3.500v1H2v-1l3-3.500zM6.500 14.500h3" fill="#ccc" stroke="#222" />],
  ['邮件', <path key="e" d="m1 6 5-3 9 6-5 4zM1 6l9.500 2.500L6 3M10.500 8.500 10 13M1 6l0 2 9 5 5-3V9" fill="#f6e04a" stroke="#6b5d00" />],
  ['主机', <g key="f"><path d="M2.500 4 5 1.500h8.500V12L11 14.500H2.500z" fill="#aaa" stroke="#333" /><path d="M3 4.500h8V14M11 4.500l2.500-3M5 7h3.500M5 11.500h3.500M3 9.500h8" stroke="#444" fill="none" /></g>],
];

/* ---------- page ---------- */

const MENUS = [['文件', 'F'], ['板块', 'M'], ['画面', 'P'], ['查看', 'V'], ['交易', 'O'], ['分析', 'A'], ['工具', 'T'], ['窗口', 'W'], ['帮助', 'H']];
const TITLE_BUTTONS = ['VIP', '股票池', '锁 定', '客 服', '策略库', '公 式', '购 买', '账 户', '委 托', 'Python', '资 讯', '行 情'];
const SIDE_TABS = ['TWS多品种交', '表日分框架', '市场全景', '王徽商100万', '未命名', '未命名', '未命名', '未命名'];
const PERIODS = ['trend', 'Bn', 'wave', 'Sn', '1', 'Mn', '3', '5', '10', '15', '30', '时', 'Hn', '日', 'Dn', '周', '月', '季', '年'];

const FIRST_TOOLS = 'home | ruler! download refresh grid > | candles alert edit | play note dollar!> filter updown | move scale zoomIn zoomOut | gear _';
const SECOND_TOOLS = 'cursor! | line > percent > columns > angle > levels > hash > square > circle > letter | magnet overlap cross trash lock textColor > save > | buy sell flat reverse _';

const renderTools = (spec: string) =>
  spec.split(' ').map((token, i) => {
    if (token === '|') return <Divider key={i} />;
    if (token === '>') return <Drop key={i} aria-label="更多" />;
    if (token === '_') return <Drop key={i} $low aria-label="工具栏选项" />;
    const name = token.replace(/[!>]/g, '');
    return (
      <Pick key={i} $on={token.includes('!')}>
        <Tool aria-label={name}><Icon name={name} /></Tool>
        {token.endsWith('>') && <Drop aria-label="更多" />}
      </Pick>
    );
  });

export default function App() {
  return (
    <Window>
      <Global />
      <TitleBar>
        <AppMark />
        <Title>金字塔决策交易系统 - [100002] - [未命名]</Title>
        <TitleTools>
          {TITLE_BUTTONS.map(t => (
            <TitleButton key={t} $tone={t === 'VIP' ? 'vip' : t === '购 买' || t === 'Python' ? 'red' : undefined}>{t}</TitleButton>
          ))}
        </TitleTools>
        <Caption>
          {['M2 5h7', 'M2 2.500h7v6H2z', 'm2 2 7 7M9 2 2 9'].map((d, i) => (
            <CaptionButton key={d} aria-label={['最小化', '最大化', '关闭'][i]}>
              <svg width="11" height="11" viewBox="0 0 11 11" fill="none" stroke="#fff" strokeWidth={i === 1 ? 1.5 : 2}><path d={d} /></svg>
            </CaptionButton>
          ))}
        </Caption>
      </TitleBar>
      <Client>
        <MenuBar>
          <Handle />
          <MenuMark />
          <MenuItems>
            {MENUS.map(([label, key]) => (
              <button key={key}>{label}(<u>{key}</u>)</button>
            ))}
          </MenuItems>
          <MdiButtons>
            {['M1 9h6', 'M4 4V1.500h6V7H7.500M1.500 4.500h6V10h-6zM1.500 5h6', 'm2 2 7 7M9 2 2 9'].map((d, i) => (
              <button key={d} aria-label={['最小化窗口', '还原窗口', '关闭窗口'][i]}>
                <svg width="12" height="12" viewBox="0 0 12 12" fill="none" stroke="#000" strokeWidth="1.400"><path d={d} /></svg>
              </button>
            ))}
          </MdiButtons>
        </MenuBar>
        <ToolRow>
          <ToolBar $start={3}><Handle />{renderTools(FIRST_TOOLS)}</ToolBar>
          <ToolBar $start={4}><Handle />{renderTools(SECOND_TOOLS)}</ToolBar>
        </ToolRow>
        <Body>
          <Side $gap={0}>
            <Grip />
            {SIDE_TABS.map((t, i) => <SideTab key={i}>{t}</SideTab>)}
            <SideClose $height={19}>
              <svg width="9" height="9" viewBox="0 0 9 9" stroke="#334" strokeWidth="1.300"><path d="m1 1 7 7M8 1 1 8" /></svg>
            </SideClose>
          </Side>
          <Main>
            <TabStrip>
              <Arrow aria-label="向左"><svg width="7" height="9" viewBox="0 0 7 9" fill="none" stroke="#000"><path d="M5.500 1v7L1 4.500z" /></svg></Arrow>
              <Tabs>
                <Tab $kind="first"><span>综合管理</span></Tab>
                <Tab $kind="mid"><span>动态显示牌</span></Tab>
                <Tab $kind="active"><span>未命名</span></Tab>
              </Tabs>
              <Arrow aria-label="向右"><svg width="7" height="9" viewBox="0 0 7 9" fill="none" stroke="#000"><path d="M1.500 1v7L6 4.500z" /></svg></Arrow>
            </TabStrip>
            <ChartFrame>
              <Charts>
                <FiveMinutePanel />
                <OneMinutePanel />
              </Charts>
            </ChartFrame>
          </Main>
          <Side $gap={3}>
            <Grip />
            {PERIODS.map(p => (
              <Period key={p} $on={p === '5'}>{p in ICONS ? <Icon name={p} size={15} /> : p}</Period>
            ))}
            <SideClose $height={14}>
              <svg width="4" height="6" viewBox="0 0 4 6"><path d="M4 0v6L0 3z" /></svg>
            </SideClose>
          </Side>
        </Body>
        <StatusBar>
          <Pane>
            {MARKETS.map(m => (
              <Market key={m.name}>
                <Num>{m.name}</Num>
                {m.nums.map(n => <Num key={n} $red>{n}</Num>)}
                <Num>{m.total}</Num>
                <Breadth $width={m.width}>
                  <Ratio />
                  <Dashes>{m.dash.split('').map((c, i) => <Dash key={i} $up={c === 'r'} />)}</Dashes>
                </Breadth>
              </Market>
            ))}
          </Pane>
          <Pane $width={84} />
          {STATUS_ICONS.map(([label, art]) => (
            <IconPane key={label} $width={27}>
              <svg width="16" height="16" viewBox="0 0 16 16" role="img" aria-label={label}>{art}</svg>
            </IconPane>
          ))}
          <Pane $width={58} $plain><Time>12:14:04</Time></Pane>
          <Grips>
            <svg width="14" height="12" viewBox="0 0 14 12" stroke="#a0a0a0"><path d="M3 12 14 1M8 12l6-6" /></svg>
          </Grips>
        </StatusBar>
      </Client>
    </Window>
  );
}
